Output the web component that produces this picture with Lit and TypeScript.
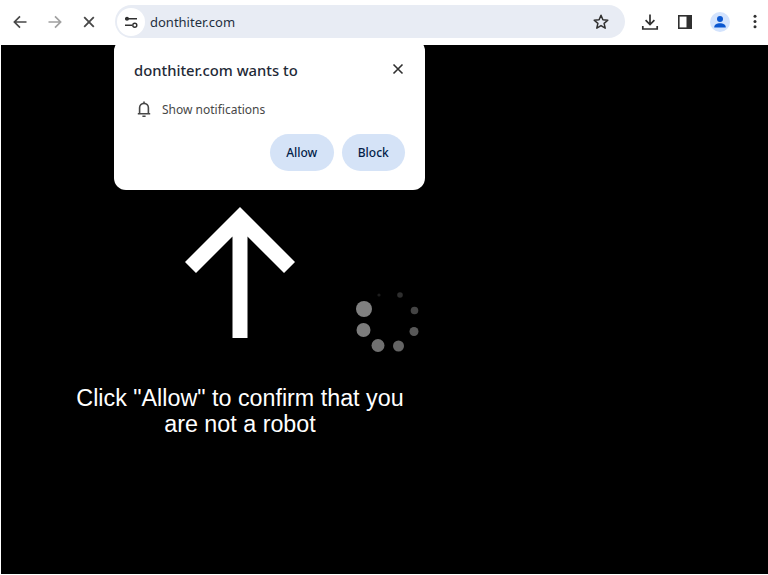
import { LitElement, html, css, svg } from "lit";
import { customElement } from "lit/decorators.js";

const dots = [
  [364, 309, 8, "#808080"],
  [363.5, 330, 7, "#7c7c7c"],
  [378, 345.5, 6.5, "#707070"],
  [398.5, 346, 5.5, "#646464"],
  [414, 331.5, 4.5, "#585858"],
  [414.5, 310.5, 3.8, "#444444"],
  [400, 295, 2.8, "#2e2e2e"],
  [379, 295, 1.6, "#1c1c1c"],
] as const;

@customElement("app-root")
export class AppRoot extends LitElement {
  static styles = css`
    :host { display: block; width: 768px; height: 575px; overflow: hidden; position: relative; background: #fff; font-family: "Noto Sans", sans-serif; }
    .toolbar { height: 44px; display: flex; align-items: center; box-sizing: border-box; padding: 0 0 1px 0; background: #fff; }
    .nav { display: flex; align-items: center; gap: 10.500px; padding-left: 8px; }
    .btn { width: 24px; height: 24px; display: flex; align-items: center; justify-content: center; flex: none; }
    .btn svg { display: block; }
    .omni { margin-left: 14px; width: 510px; height: 33px; border-radius: 17px; background: #e8ecf4; display: flex; align-items: center; box-sizing: border-box; padding: 0 15px 0 2px; flex: none; }
    .tune { width: 28px; height: 28px; border-radius: 50%; background: #fff; display: flex; align-items: center; justify-content: center; flex: none; }
    .url { margin-left: 5px; font-size: 13px; color: #1f2f3f; flex: 1; }
    .actions { display: flex; align-items: center; margin-left: 13px; }
    .actions .btn { margin-right: 11px; }
    .actions .btn:last-child { margin-right: 0; }
    .avatar { width: 20px; height: 20px; border-radius: 50%; background: #d3e3fd; display: flex; align-items: center; justify-content: center; }
    .stage { width: 767px; height: 529px; margin: 1px 0 0 1px; background: #000; }
    .col { width: 478px; display: flex; flex-direction: column; align-items: center; padding-top: 162px; }
    .arrow { display: block; }
    .msg { margin-top: 47px; color: #fff; font-family: "Liberation Sans", Arial, sans-serif; font-size: 23.300px; line-height: 26px; text-align: center; width: 340px; }
    .spin { position: absolute; inset: 0; pointer-events: none; }
    .popup { position: absolute; left: 114px; top: 39px; width: 311px; height: 151px; box-sizing: border-box; background: #fff; border-radius: 12px; padding: 21px 20px 19px 20px; display: flex; flex-direction: column; }
    .head { display: flex; align-items: center; justify-content: space-between; height: 20px; }
    .title { font-size: 14.800px; font-weight: 500; color: #1f2a37; }
    .close { width: 20px; height: 20px; margin-right: -2.500px; margin-top: -3px; display: flex; align-items: center; justify-content: center; }
    .row { display: flex; align-items: center; margin-top: 19px; height: 20px; gap: 9px; padding-left: 1px; }
    .row span { font-size: 12px; color: #474747; }
    .buttons { display: flex; justify-content: flex-end; gap: 8px; margin-top: 15px; }
    .pill { width: 63.500px; height: 37px; border-radius: 19px; background: #d5e3f7; color: #041e49; font-size: 12px; font-weight: 500; display: flex; align-items: center; justify-content: center; }
  `;

  render() {
    const ic = "#474747";
    return html`
      <div class="toolbar">
        <div class="nav">
          <div class="btn"><svg width="16" height="16" viewBox="0 0 16 16"><path d="M14.500 8H2.600M8 2.400 2.400 8 8 13.600" fill="none" stroke="${ic}" stroke-width="1.700"/></svg></div>
          <div class="btn"><svg width="16" height="16" viewBox="0 0 16 16"><path d="M1.500 8h11.900M8 2.400 13.600 8 8 13.600" fill="none" stroke="#a0a0a0" stroke-width="1.700"/></svg></div>
          <div class="btn"><svg width="14" height="14" viewBox="0 0 14 14"><path d="M2.200 2.200l9.600 9.600M11.800 2.200l-9.600 9.600" fill="none" stroke="${ic}" stroke-width="1.800"/></svg></div>
        </div>
        <div class="omni">
          <div class="tune"><svg width="16" height="14" viewBox="0 0 16 14"><path d="M2 3.800h12M2 10.200h7" stroke="#303030" stroke-width="1.400" fill="none"/><circle cx="11.800" cy="10.200" r="2" fill="#fff" stroke="#303030" stroke-width="1.400"/><circle cx="4" cy="3.800" r="2" fill="#303030"/></svg></div>
          <div class="url">donthiter.com</div>
          <svg width="18" height="18" viewBox="0 0 18 18"><path d="M9 2.300l1.900 4.500 4.900.4-3.700 3.200 1.100 4.800L9 12.600l-4.200 2.600 1.100-4.800-3.700-3.200 4.900-.4z" fill="none" stroke="#303030" stroke-width="1.500" stroke-linejoin="round"/></svg>
        </div>
        <div class="actions">
          <div class="btn"><svg width="18" height="18" viewBox="0 0 18 18"><path d="M9 1.500v10M4.600 7.200 9 11.600l4.400-4.400M1.800 13v3h14.400v-3" fill="none" stroke="#303030" stroke-width="1.700"/></svg></div>
          <div class="btn"><svg width="14" height="14" viewBox="0 0 14 14"><rect x="0.800" y="0.800" width="12.400" height="12.400" fill="none" stroke="#303030" stroke-width="1.600"/><rect x="8.500" y="1" width="5" height="12" fill="#303030"/></svg></div>
          <div class="btn"><div class="avatar"><svg width="14" height="14" viewBox="0 0 14 14"><circle cx="7" cy="4" r="3" fill="#0b57d0"/><path d="M1.200 12.500c0-3 2.800-4.200 5.800-4.200s5.800 1.200 5.800 4.200z" fill="#0b57d0"/></svg></div></div>
          <div class="btn"><svg width="4" height="15" viewBox="0 0 4 15"><circle cx="2" cy="2.200" r="1.500" fill="#303030"/><circle cx="2" cy="7.500" r="1.500" fill="#303030"/><circle cx="2" cy="12.800" r="1.500" fill="#303030"/></svg></div>
        </div>
      </div>
      <div class="stage">
        <div class="col">
          <svg class="arrow" width="110" height="131" viewBox="0 0 110 131"><path d="M55 0 110 55 99 66 62.500 29.500V131H47.500V29.500L11 66 0 55z" fill="#fff"/></svg>
          <div class="msg">Click "Allow" to confirm that you are not a robot</div>
        </div>
      </div>
      <svg class="spin" width="768" height="575">${dots.map(([x, y, r, c]) => svg`<circle cx="${x}" cy="${y}" r="${r}" fill="${c}"/>`)}</svg>
      <div class="popup">
        <div class="head">
          <div class="title">donthiter.com wants to</div>
          <div class="close"><svg width="12" height="12" viewBox="0 0 12 12"><path d="M1.500 1.500l9 9M10.500 1.500l-9 9" stroke="#303030" stroke-width="1.600" fill="none"/></svg></div>
        </div>
        <div class="row">
          <svg width="18" height="18" viewBox="0 0 18 18"><path d="M2.800 13.800h12.400M4.600 13.800V7.800a4.400 4.400 0 0 1 8.800 0v6M9 1.600v1.800M7.400 16.200h3.200" fill="none" stroke="#474747" stroke-width="1.600"/></svg>
          <span>Show notifications</span>
        </div>
        <div class="buttons"><div class="pill">Allow</div><div class="pill">Block</div></div>
      </div>
    `;
  }
}
